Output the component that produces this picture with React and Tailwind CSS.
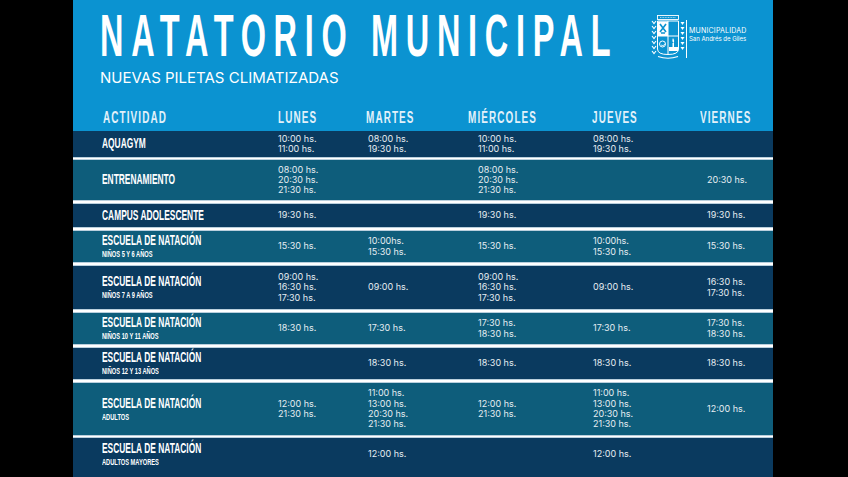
import React from "react";

const cols = "grid grid-cols-[205px_90px_110px_115px_114px_66px]";

const rows = [
  { label: "AQUAGYM", h: "h-[26px]", bg: "bg-[#0a3a5f]", times: [["10:00 hs.", "11:00 hs."], ["08:00 hs.", "19:30 hs."], ["10:00 hs.", "11:00 hs."], ["08:00 hs.", "19:30 hs."], []] },
  { label: "ENTRENAMIENTO", h: "h-[40px]", bg: "bg-[#0e5d7b]", times: [["08:00 hs.", "20:30 hs.", "21:30 hs."], [], ["08:00 hs.", "20:30 hs.", "21:30 hs."], [], ["20:30 hs."]] },
  { label: "CAMPUS ADOLESCENTE", h: "h-[23px]", bg: "bg-[#0a3a5f]", times: [["19:30 hs."], [], ["19:30 hs."], [], ["19:30 hs."]] },
  { label: "ESCUELA DE NATACIÓN", sub: "NIÑOS 5 Y 6 AÑOS", h: "h-[31px]", bg: "bg-[#0e5d7b]", times: [["15:30 hs."], ["10:00hs.", "15:30 hs."], ["15:30 hs."], ["10:00hs.", "15:30 hs."], ["15:30 hs."]] },
  { label: "ESCUELA DE NATACIÓN", sub: "NIÑOS 7 A 9 AÑOS", h: "h-[43px]", bg: "bg-[#0a3a5f]", times: [["09:00 hs.", "16:30 hs.", "17:30 hs."], ["09:00 hs."], ["09:00 hs.", "16:30 hs.", "17:30 hs."], ["09:00 hs."], ["16:30 hs.", "17:30 hs."]] },
  { label: "ESCUELA DE NATACIÓN", sub: "NIÑOS 10 Y 11 AÑOS", h: "h-[31px]", bg: "bg-[#0e5d7b]", times: [["18:30 hs."], ["17:30 hs."], ["17:30 hs.", "18:30 hs."], ["17:30 hs."], ["17:30 hs.", "18:30 hs."]] },
  { label: "ESCUELA DE NATACIÓN", sub: "NIÑOS 12 Y 13 AÑOS", h: "h-[31px]", bg: "bg-[#0a3a5f]", times: [[], ["18:30 hs."], ["18:30 hs."], ["18:30 hs."], ["18:30 hs."]] },
  { label: "ESCUELA DE NATACIÓN", sub: "ADULTOS", h: "h-[52px]", bg: "bg-[#0e5d7b]", times: [["12:00 hs.", "21:30 hs."], ["11:00 hs.", "13:00 hs.", "20:30 hs.", "21:30 hs."], ["12:00 hs.", "21:30 hs."], ["11:00 hs.", "13:00 hs.", "20:30 hs.", "21:30 hs."], ["12:00 hs."]] },
  { label: "ESCUELA DE NATACIÓN", sub: "ADULTOS MAYORES", h: "h-[32px]", bg: "bg-[#0a3a5f]", times: [[], ["12:00 hs."], [], ["12:00 hs."], []] },
];

// condensed display type, squeezed from Liberation Sans Bold
function Cond({ className, children }) {
  return (
    <span className={`block origin-left whitespace-nowrap font-['Liberation_Sans',Arial,sans-serif] font-bold ${className}`}>
      {children}
    </span>
  );
}

function Logo() {
  return (
    <div className="mt-[14px] flex shrink-0 items-start">
      <svg width="34" height="46" viewBox="0 0 34 46" fill="none">
        {[7, 12, 17, 22, 27, 32, 37].map((y) => (
          <path key={y} d={`M1 ${y} L3 ${y + 2.5} L5 ${y}`} stroke="white" strokeWidth="1.1" />
        ))}
        {[8, 13, 18, 23, 28, 33].map((y) => (
          <path key={y} d={`M29.5 ${y} H33.5 L31.5 ${y + 3} Z`} fill="white" />
        ))}
        <rect x="6.5" y="1.5" width="21" height="4" stroke="white" strokeWidth="0.9" />
        <path d="M9 3.5 H25" stroke="white" strokeWidth="0.6" strokeDasharray="1 0.6" />
        <path d="M6.5 7 H27.5 V35 Q27.5 40.5 17 40.5 Q6.5 40.5 6.5 35 Z" stroke="white" strokeWidth="1" />
        <rect x="7" y="7.5" width="10" height="14.5" fill="white" />
        <path d="M9 10 L15 18 M15 10 L9 18 M10 19 H14" stroke="#0b93d1" strokeWidth="1.6" />
        <path d="M17 7 V40 M6.5 22 H27.5" stroke="white" strokeWidth="1" />
        <circle cx="11.5" cy="30" r="3" stroke="white" strokeWidth="1" />
        <path d="M10 31 Q12 33 14 30" stroke="white" strokeWidth="0.8" />
        <path d="M22 24 Q24 27 22.5 29 Q20.5 27 22 24 Z" fill="white" />
        <rect x="21.5" y="29" width="1.5" height="4" fill="white" />
        <rect x="18" y="33" width="9" height="4" fill="white" />
        <path d="M7 42.5 Q17 46 27 42.5" stroke="white" strokeWidth="1.2" />
      </svg>
      <div className="ml-px mt-[6px] h-[38px] w-px bg-white" />
      <div className="ml-[2px] mt-[13px] font-['Inter',sans-serif] text-white">
        <div className="text-[7px] leading-[8px] tracking-[0.2px]">MUNICIPALIDAD</div>
        <div className="text-[6px] leading-[8px]">San Andrés de Giles</div>
      </div>
    </div>
  );
}

function Times({ list }) {
  return (
    <div className="font-['Inter',sans-serif] text-[9px] leading-[10.3px] text-[#e6edf2]">
      {list.map((t, i) => (
        <div key={i}>{t}</div>
      ))}
    </div>
  );
}

export default function App() {
  const heads = [
    { t: "LUNES", c: "" },
    { t: "MARTES", c: "ml-[-2px]" },
    { t: "MIÉRCOLES", c: "ml-[-10px]" },
    { t: "JUEVES", c: "ml-[-1px]" },
    { t: "VIERNES", c: "ml-[-7px]" },
  ];

  return (
    <div className="h-[477px] overflow-hidden bg-black">
      <div className="ml-[73px] flex h-[477px] w-[700px] flex-col overflow-hidden bg-[#0a3a5f]">
        <header className="flex h-[131px] shrink-0 flex-col bg-[#0b93d1]">
          <div className="flex pl-[27px]">
            <div className="w-[551px] shrink-0">
              <div className="mt-[7px] h-[59px]">
                <Cond className="scale-x-[0.55] text-[59px] leading-[59px] tracking-[14px] text-white">NATATORIO MUNICIPAL</Cond>
              </div>
              <div className="mt-[4px] font-['Inter',sans-serif] text-[15px] leading-[15px] text-white">
                NUEVAS PILETAS CLIMATIZADAS
              </div>
            </div>
            <Logo />
          </div>
          <div className={`${cols} mb-[5px] mt-auto h-[16px]`}>
            <div className="pl-[30px]">
              <Cond className="scale-x-[0.62] text-[16px] leading-[16px] tracking-[1.8px] text-[#e2f1fa]">ACTIVIDAD</Cond>
            </div>
            {heads.map((h) => (
              <div key={h.t} className={h.c}>
                <Cond className="scale-x-[0.62] text-[16px] leading-[16px] tracking-[1.8px] text-[#e2f1fa]">{h.t}</Cond>
              </div>
            ))}
          </div>
        </header>

        {rows.map((r, i) => (
          <React.Fragment key={i}>
            {i > 0 ? <div className={`shrink-0 border-y border-[#b9cfdd] bg-white ${i === 1 || i === 8 ? "h-[3px]" : "h-[4px]"}`} /> : null}
            <div className={`${cols} ${r.h} ${r.bg} shrink-0 items-center`}>
              <div className="flex flex-col pl-[29px] text-white">
                <Cond className="scale-x-[0.6] text-[14px] leading-[15.6px]">{r.label}</Cond>
                {r.sub ? <Cond className="scale-x-[0.6] text-[9.5px] leading-[10.6px]">{r.sub}</Cond> : null}
              </div>
              {r.times.map((t, j) => (
                <Times key={j} list={t} />
              ))}
            </div>
          </React.Fragment>
        ))}
      </div>
    </div>
  );
}
